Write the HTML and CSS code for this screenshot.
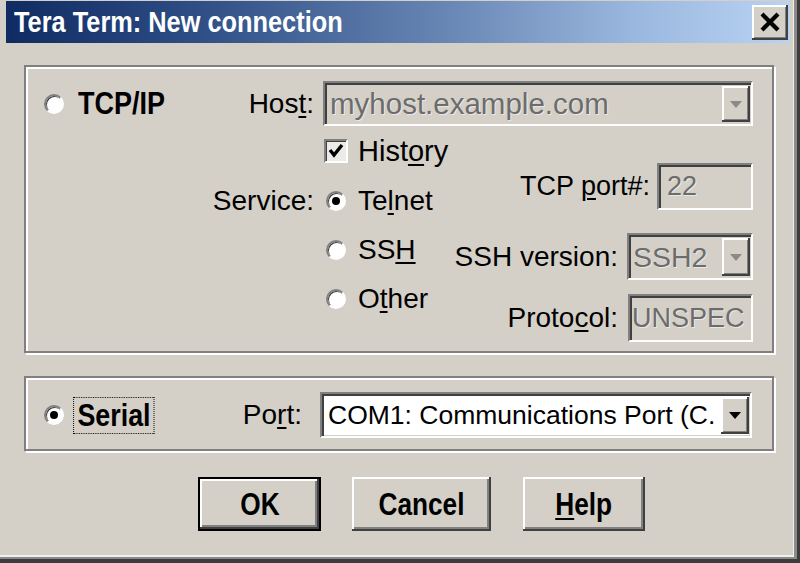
FILE: index.html
```html
<!DOCTYPE html>
<html>
<head>
<meta charset="utf-8">
<title>Tera Term: New connection</title>
<link rel="stylesheet" href="styles.css">
</head>
<body>
<div class="window">
  <div class="titlebar">
    <span class="title">Tera Term: New connection</span>
    <div class="close">
      <svg width="22" height="20" viewBox="0 0 22 20"><path d="M3 2 L19 18 M19 2 L3 18" stroke="#000" stroke-width="4.2" fill="none"/></svg>
    </div>
  </div>
  <div class="content">
    <div class="group tcp">
      <div class="cell main-opt r1">
        <span class="radio"></span><span class="bold">TCP/IP</span>
      </div>
      <div class="cell lbl r1"><span>Hos<u>t</u>:</span></div>
      <div class="combo disabled host">
        <span class="ctext">myhost.example.com</span>
        <span class="ddbtn"><span class="tri"></span></span>
      </div>
      <div class="cell opt r2 chk">
        <span class="checkbox"><svg width="20" height="20" viewBox="0 0 20 20"><path d="M4 9 L8 14 L16 4" stroke="#000" stroke-width="3.4" fill="none"/></svg></span><span>Hist<u>o</u>ry</span>
      </div>
      <div class="cell lbl r3"><span>Service:</span></div>
      <div class="cell opt r3"><span class="radio on"></span><span>Te<u>l</u>net</span></div>
      <div class="cell opt r4"><span class="radio"></span><span>SS<u>H</u></span></div>
      <div class="cell opt r5"><span class="radio"></span><span>O<u>t</u>her</span></div>
      <div class="rightcol">
        <div class="frow port">
          <span>TCP <u>p</u>ort#:</span>
          <div class="edit disabled w-port">22</div>
        </div>
        <div class="frow sshv">
          <span>SSH version:</span>
          <div class="combo disabled w-ssh">
            <span class="ctext">SSH2</span>
            <span class="ddbtn"><span class="tri"></span></span>
          </div>
        </div>
        <div class="frow proto">
          <span>Proto<u>c</u>ol:</span>
          <div class="edit disabled w-proto">UNSPEC</div>
        </div>
      </div>
    </div>

    <div class="group serial">
      <div class="main-opt s-opt">
        <span class="radio on"></span><span class="bold focus">Serial</span>
      </div>
      <div class="s-lbl"><span>Po<u>r</u>t:</span></div>
      <div class="combo enabled com">
        <span class="ctext">COM1: Communications Port (C.</span>
        <span class="ddbtn"><span class="tri"></span></span>
      </div>
    </div>

    <div class="buttons">
      <div class="btn default"><span class="btxt">OK</span></div>
      <div class="btn cancel"><span class="btxt">Cancel</span></div>
      <div class="btn help"><span class="btxt"><u>H</u>elp</span></div>
    </div>
  </div>
</div>
</body>
</html>
```

FILE: styles.css
```css
html, body {
  margin: 0;
  padding: 0;
  background: #d4d0c8;
}
body {
  font-family: "Liberation Sans", Arial, sans-serif;
  font-size: 28px;
  color: #000;
}
u {
  text-decoration-thickness: 2px;
  text-underline-offset: 3px;
}

.window {
  width: 800px;
  height: 563px;
  box-sizing: border-box;
  background: #d4d0c8;
  padding-top: 1px;
  border-right: 3px solid #3c3c3c;
  border-bottom: 4px solid #3c3c3c;
  box-shadow: inset -3px -2px 0 #8a8a8a, inset -4px -4px 0 #f2f0ec;
  display: flex;
  flex-direction: column;
}

.titlebar {
  height: 42px;
  margin: 0 7px 0 6px;
  padding: 0 2px 0 8px;
  display: flex;
  align-items: center;
  justify-content: space-between;
  background: linear-gradient(90deg, #0f2b62 0%, #2f4f86 25%, #6684b2 55%, #9ab7de 80%, #b9d3f3 100%);
}
.title {
  display: inline-block;
  color: #fff;
  font-weight: bold;
  font-size: 30px;
  white-space: nowrap;
  transform: scaleX(0.845);
  transform-origin: left center;
}
.close {
  width: 36px;
  height: 35px;
  box-sizing: border-box;
  background: #d4d0c8;
  box-shadow: inset -2px -2px 0 #404040, inset 2px 2px 0 #fff, inset -3px -3px 0 #808080;
  display: flex;
  align-items: center;
  justify-content: center;
}

.content {
  padding: 22px 0 0 24px;
}

.group {
  width: 750px;
  box-sizing: border-box;
  border: 2px solid #808080;
  box-shadow: inset 2px 2px 0 #fff, 2px 2px 0 #fff;
}

/* TCP/IP group */
.tcp {
  display: grid;
  grid-template-columns: 174px 123px 127px 1fr;
  grid-template-rows: 45px 50px 49px 49px 49px;
  padding: 14px 19px 28px 0;
}
.cell {
  display: flex;
  align-items: center;
}
.r1 { grid-row: 1; }
.r2 { grid-row: 2; }
.r3 { grid-row: 3; }
.r4 { grid-row: 4; }
.r5 { grid-row: 5; }
.main-opt {
  grid-column: 1;
  padding-left: 18px;
  gap: 14px;
}
.lbl {
  grid-column: 2;
  justify-content: flex-end;
  padding-right: 9px;
}
.opt {
  grid-column: 3;
  padding-left: 3px;
  gap: 12px;
}
.chk {
  padding-left: 1px;
  gap: 10px;
  font-size: 29px;
}
.host {
  grid-column: 3 / 5;
  grid-row: 1;
  height: 45px;
  font-size: 29.5px;
}
.bold {
  display: inline-block;
  font-weight: bold;
  font-size: 30.5px;
  white-space: nowrap;
  transform: scaleX(0.885);
  transform-origin: left center;
}

.rightcol {
  grid-column: 4;
  grid-row: 2 / 6;
  display: flex;
  flex-direction: column;
  align-items: flex-end;
  padding-top: 37px;
}
.frow {
  display: flex;
  align-items: center;
}
.port { gap: 7px; font-size: 27px; }
.sshv { gap: 9px; margin-top: 23px; }
.proto { gap: 10px; margin-top: 14px; }

/* controls */
.radio {
  position: relative;
  flex: none;
  width: 20px;
  height: 20px;
  box-sizing: border-box;
  border-radius: 50%;
  background: #fff;
  border: 2px solid;
  border-color: #808080 #fff #fff #808080;
  box-shadow: inset 1px 1px 0 #404040;
}
.radio.on::after {
  content: "";
  position: absolute;
  left: 4px;
  top: 4px;
  width: 8px;
  height: 8px;
  border-radius: 50%;
  background: #000;
}
.checkbox {
  flex: none;
  width: 24px;
  height: 24px;
  box-sizing: border-box;
  background: #ecebe7;
  border: 2px solid;
  border-color: #808080 #fff #fff #808080;
  box-shadow: inset 1px 1px 0 #404040;
  display: flex;
  align-items: center;
  justify-content: center;
}

.combo, .edit {
  box-sizing: border-box;
  display: flex;
  align-items: center;
  border: 2px solid;
  border-color: #808080 #fff #fff #808080;
  box-shadow: inset 2px 2px 0 #404040, inset -1px -1px 0 #d4d0c8;
  white-space: nowrap;
  overflow: hidden;
}
.combo {
  padding: 3px 1px 2px 5px;
}
.ctext {
  flex: 1;
  overflow: hidden;
}
.disabled {
  background: #d4d0c8;
  color: #6c6c6c;
  text-shadow: 1px 1px 0 rgba(255,255,255,0.55);
}
.enabled {
  background: #fff;
  color: #000;
}
.ddbtn {
  flex: none;
  width: 28px;
  align-self: stretch;
  background: #d4d0c8;
  box-shadow: inset -2px -2px 0 #404040, inset 2px 2px 0 #fff, inset -3px -3px 0 #808080;
  display: flex;
  align-items: center;
  justify-content: center;
}
.tri {
  width: 0;
  height: 0;
  border-left: 6px solid transparent;
  border-right: 6px solid transparent;
  border-top: 7px solid #000;
}
.disabled .tri {
  border-top-color: #8a8a8a;
}

.w-port {
  width: 96px;
  height: 47px;
  padding-left: 8px;
  font-size: 27px;
}
.w-ssh {
  width: 126px;
  height: 47px;
  padding-left: 4px;
  font-size: 28.5px;
}
.w-proto {
  width: 125px;
  height: 48px;
  padding-left: 2px;
  font-size: 27px;
}

/* Serial group */
.serial {
  margin-top: 23px;
  display: flex;
  align-items: center;
  padding: 14px 20px 11px 0;
}
.s-opt {
  display: flex;
  align-items: center;
  width: 174px;
  box-sizing: border-box;
  gap: 10px;
}
.focus {
  font-size: 31px;
  transform: scaleX(0.865);
  outline: 1px dotted #000;
  padding: 0 4px;
  line-height: 35px;
}
.s-lbl {
  width: 102px;
  text-align: right;
  margin-right: 18px;
}
.com {
  flex: 1;
  height: 46px;
  font-size: 26.5px;
  padding-left: 6px;
}

/* buttons */
.buttons {
  display: flex;
  margin-top: 26px;
  padding-left: 174px;
}
.btn {
  height: 54px;
  box-sizing: border-box;
  display: flex;
  align-items: center;
  justify-content: center;
  background: #d4d0c8;
  box-shadow: inset -2px -2px 0 #404040, inset 2px 2px 0 #fff, inset -4px -4px 0 #808080;
}
.btxt {
  display: inline-block;
  white-space: nowrap;
  font-weight: bold;
  font-size: 32px;
  transform: scaleX(0.82);
}
.btn.default {
  width: 123px;
  border: 2px solid #000;
}
.btn.cancel {
  width: 139px;
  margin-left: 31px;
}
.btn.help {
  width: 122px;
  margin-left: 32px;
}
```
